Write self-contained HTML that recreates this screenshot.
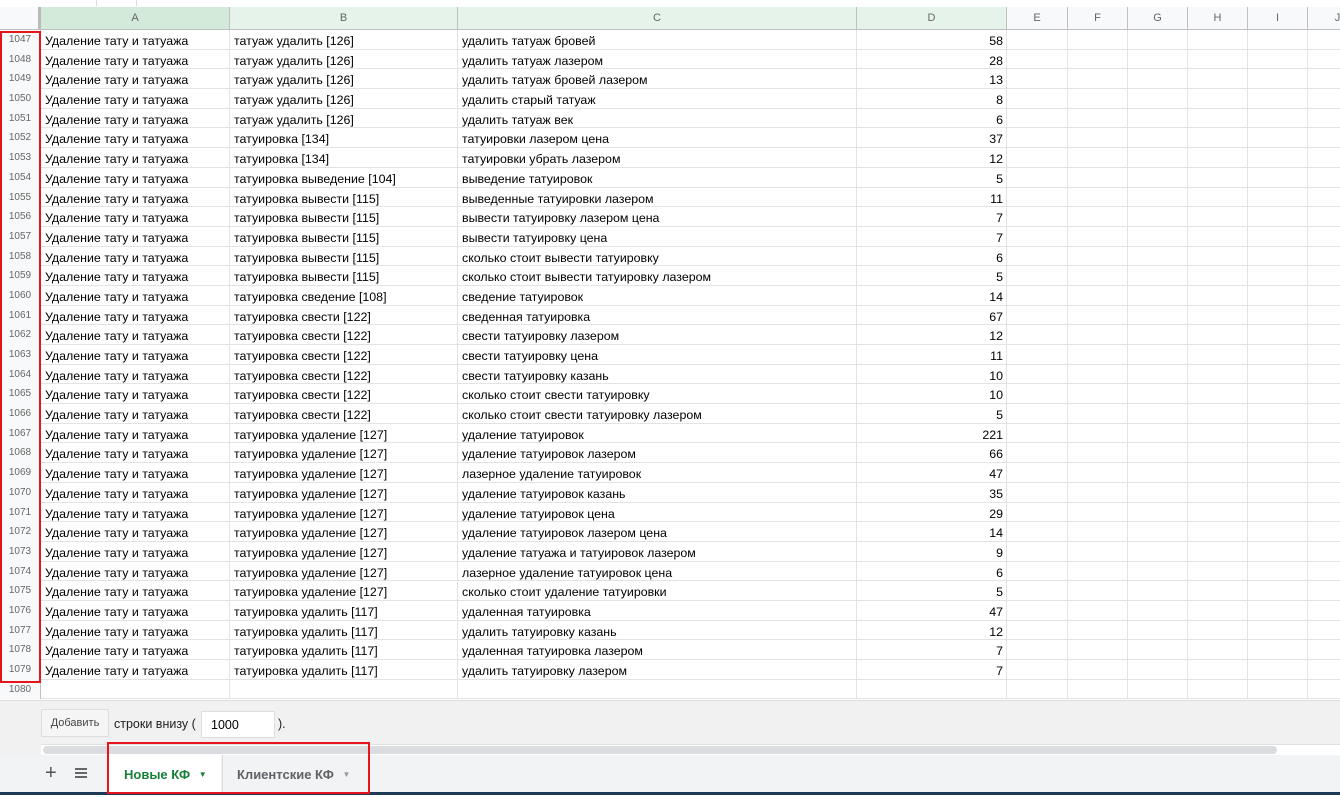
<!DOCTYPE html>
<html><head><meta charset="utf-8"><style>
*{box-sizing:border-box;margin:0;padding:0}
body{width:1340px;height:795px;overflow:hidden;background:#fff;font-family:"Liberation Sans",Arial,sans-serif;position:relative}
.hdr{position:absolute;top:7px;left:0;height:23px;width:1340px;background:#f8f9fa;border-bottom:1px solid #c0c0c0}
.hdr div{position:absolute;top:0;height:22px;border-right:1px solid #c0c0c0;font-size:11px;color:#666;text-align:center;line-height:22px}
.grid{position:absolute;top:30px;left:0;width:1340px}
.r{position:relative;height:19.7px;border-bottom:1px solid #e2e3e3}
.r div{position:absolute;top:0;height:19.7px;border-right:1px solid #e2e3e3;font-size:12.4px;color:#000;line-height:23px;white-space:nowrap;overflow:hidden;padding-left:4px}
.r .n{left:0;width:41px;background:#f8f9fa;border-right:1px solid #c0c0c0;color:#666;font-size:10px;text-align:center;padding:0;line-height:20px}
.r .a{left:41px;width:189px}.r .b{left:230px;width:228px}.r .c{left:458px;width:399px}
.r .d{left:857px;width:150px;text-align:right;padding-right:3px}
.r .e{left:1007px;width:61px}.r .f{left:1068px;width:60px}.r .g{left:1128px;width:60px}.r .h{left:1188px;width:60px}.r .i{left:1248px;width:60px}
</style></head><body>
<div style="position:absolute;top:0;left:96px;width:1px;height:6px;background:#ddd"></div>
<div style="position:absolute;top:0;left:136px;width:1px;height:6px;background:#ddd"></div>
<div class="hdr">
<div style="left:0;width:41px;border-right:3px solid #bbb"></div>
<div style="left:41px;width:189px;background:#d3e9d9">A</div>
<div style="left:230px;width:228px;background:#e6f3ea">B</div>
<div style="left:458px;width:399px;background:#e6f3ea">C</div>
<div style="left:857px;width:150px;background:#e6f3ea">D</div>
<div style="left:1007px;width:61px">E</div>
<div style="left:1068px;width:60px">F</div>
<div style="left:1128px;width:60px">G</div>
<div style="left:1188px;width:60px">H</div>
<div style="left:1248px;width:60px">I</div>
<div style="left:1308px;width:60px">J</div>
</div>
<div class="grid">
<div class="r"><div class="n">1047</div><div class="a">Удаление тату и татуажа</div><div class="b">татуаж удалить [126]</div><div class="c">удалить татуаж бровей</div><div class="d">58</div><div class="e"></div><div class="f"></div><div class="g"></div><div class="h"></div><div class="i"></div></div>
<div class="r"><div class="n">1048</div><div class="a">Удаление тату и татуажа</div><div class="b">татуаж удалить [126]</div><div class="c">удалить татуаж лазером</div><div class="d">28</div><div class="e"></div><div class="f"></div><div class="g"></div><div class="h"></div><div class="i"></div></div>
<div class="r"><div class="n">1049</div><div class="a">Удаление тату и татуажа</div><div class="b">татуаж удалить [126]</div><div class="c">удалить татуаж бровей лазером</div><div class="d">13</div><div class="e"></div><div class="f"></div><div class="g"></div><div class="h"></div><div class="i"></div></div>
<div class="r"><div class="n">1050</div><div class="a">Удаление тату и татуажа</div><div class="b">татуаж удалить [126]</div><div class="c">удалить старый татуаж</div><div class="d">8</div><div class="e"></div><div class="f"></div><div class="g"></div><div class="h"></div><div class="i"></div></div>
<div class="r"><div class="n">1051</div><div class="a">Удаление тату и татуажа</div><div class="b">татуаж удалить [126]</div><div class="c">удалить татуаж век</div><div class="d">6</div><div class="e"></div><div class="f"></div><div class="g"></div><div class="h"></div><div class="i"></div></div>
<div class="r"><div class="n">1052</div><div class="a">Удаление тату и татуажа</div><div class="b">татуировка [134]</div><div class="c">татуировки лазером цена</div><div class="d">37</div><div class="e"></div><div class="f"></div><div class="g"></div><div class="h"></div><div class="i"></div></div>
<div class="r"><div class="n">1053</div><div class="a">Удаление тату и татуажа</div><div class="b">татуировка [134]</div><div class="c">татуировки убрать лазером</div><div class="d">12</div><div class="e"></div><div class="f"></div><div class="g"></div><div class="h"></div><div class="i"></div></div>
<div class="r"><div class="n">1054</div><div class="a">Удаление тату и татуажа</div><div class="b">татуировка выведение [104]</div><div class="c">выведение татуировок</div><div class="d">5</div><div class="e"></div><div class="f"></div><div class="g"></div><div class="h"></div><div class="i"></div></div>
<div class="r"><div class="n">1055</div><div class="a">Удаление тату и татуажа</div><div class="b">татуировка вывести [115]</div><div class="c">выведенные татуировки лазером</div><div class="d">11</div><div class="e"></div><div class="f"></div><div class="g"></div><div class="h"></div><div class="i"></div></div>
<div class="r"><div class="n">1056</div><div class="a">Удаление тату и татуажа</div><div class="b">татуировка вывести [115]</div><div class="c">вывести татуировку лазером цена</div><div class="d">7</div><div class="e"></div><div class="f"></div><div class="g"></div><div class="h"></div><div class="i"></div></div>
<div class="r"><div class="n">1057</div><div class="a">Удаление тату и татуажа</div><div class="b">татуировка вывести [115]</div><div class="c">вывести татуировку цена</div><div class="d">7</div><div class="e"></div><div class="f"></div><div class="g"></div><div class="h"></div><div class="i"></div></div>
<div class="r"><div class="n">1058</div><div class="a">Удаление тату и татуажа</div><div class="b">татуировка вывести [115]</div><div class="c">сколько стоит вывести татуировку</div><div class="d">6</div><div class="e"></div><div class="f"></div><div class="g"></div><div class="h"></div><div class="i"></div></div>
<div class="r"><div class="n">1059</div><div class="a">Удаление тату и татуажа</div><div class="b">татуировка вывести [115]</div><div class="c">сколько стоит вывести татуировку лазером</div><div class="d">5</div><div class="e"></div><div class="f"></div><div class="g"></div><div class="h"></div><div class="i"></div></div>
<div class="r"><div class="n">1060</div><div class="a">Удаление тату и татуажа</div><div class="b">татуировка сведение [108]</div><div class="c">сведение татуировок</div><div class="d">14</div><div class="e"></div><div class="f"></div><div class="g"></div><div class="h"></div><div class="i"></div></div>
<div class="r"><div class="n">1061</div><div class="a">Удаление тату и татуажа</div><div class="b">татуировка свести [122]</div><div class="c">сведенная татуировка</div><div class="d">67</div><div class="e"></div><div class="f"></div><div class="g"></div><div class="h"></div><div class="i"></div></div>
<div class="r"><div class="n">1062</div><div class="a">Удаление тату и татуажа</div><div class="b">татуировка свести [122]</div><div class="c">свести татуировку лазером</div><div class="d">12</div><div class="e"></div><div class="f"></div><div class="g"></div><div class="h"></div><div class="i"></div></div>
<div class="r"><div class="n">1063</div><div class="a">Удаление тату и татуажа</div><div class="b">татуировка свести [122]</div><div class="c">свести татуировку цена</div><div class="d">11</div><div class="e"></div><div class="f"></div><div class="g"></div><div class="h"></div><div class="i"></div></div>
<div class="r"><div class="n">1064</div><div class="a">Удаление тату и татуажа</div><div class="b">татуировка свести [122]</div><div class="c">свести татуировку казань</div><div class="d">10</div><div class="e"></div><div class="f"></div><div class="g"></div><div class="h"></div><div class="i"></div></div>
<div class="r"><div class="n">1065</div><div class="a">Удаление тату и татуажа</div><div class="b">татуировка свести [122]</div><div class="c">сколько стоит свести татуировку</div><div class="d">10</div><div class="e"></div><div class="f"></div><div class="g"></div><div class="h"></div><div class="i"></div></div>
<div class="r"><div class="n">1066</div><div class="a">Удаление тату и татуажа</div><div class="b">татуировка свести [122]</div><div class="c">сколько стоит свести татуировку лазером</div><div class="d">5</div><div class="e"></div><div class="f"></div><div class="g"></div><div class="h"></div><div class="i"></div></div>
<div class="r"><div class="n">1067</div><div class="a">Удаление тату и татуажа</div><div class="b">татуировка удаление [127]</div><div class="c">удаление татуировок</div><div class="d">221</div><div class="e"></div><div class="f"></div><div class="g"></div><div class="h"></div><div class="i"></div></div>
<div class="r"><div class="n">1068</div><div class="a">Удаление тату и татуажа</div><div class="b">татуировка удаление [127]</div><div class="c">удаление татуировок лазером</div><div class="d">66</div><div class="e"></div><div class="f"></div><div class="g"></div><div class="h"></div><div class="i"></div></div>
<div class="r"><div class="n">1069</div><div class="a">Удаление тату и татуажа</div><div class="b">татуировка удаление [127]</div><div class="c">лазерное удаление татуировок</div><div class="d">47</div><div class="e"></div><div class="f"></div><div class="g"></div><div class="h"></div><div class="i"></div></div>
<div class="r"><div class="n">1070</div><div class="a">Удаление тату и татуажа</div><div class="b">татуировка удаление [127]</div><div class="c">удаление татуировок казань</div><div class="d">35</div><div class="e"></div><div class="f"></div><div class="g"></div><div class="h"></div><div class="i"></div></div>
<div class="r"><div class="n">1071</div><div class="a">Удаление тату и татуажа</div><div class="b">татуировка удаление [127]</div><div class="c">удаление татуировок цена</div><div class="d">29</div><div class="e"></div><div class="f"></div><div class="g"></div><div class="h"></div><div class="i"></div></div>
<div class="r"><div class="n">1072</div><div class="a">Удаление тату и татуажа</div><div class="b">татуировка удаление [127]</div><div class="c">удаление татуировок лазером цена</div><div class="d">14</div><div class="e"></div><div class="f"></div><div class="g"></div><div class="h"></div><div class="i"></div></div>
<div class="r"><div class="n">1073</div><div class="a">Удаление тату и татуажа</div><div class="b">татуировка удаление [127]</div><div class="c">удаление татуажа и татуировок лазером</div><div class="d">9</div><div class="e"></div><div class="f"></div><div class="g"></div><div class="h"></div><div class="i"></div></div>
<div class="r"><div class="n">1074</div><div class="a">Удаление тату и татуажа</div><div class="b">татуировка удаление [127]</div><div class="c">лазерное удаление татуировок цена</div><div class="d">6</div><div class="e"></div><div class="f"></div><div class="g"></div><div class="h"></div><div class="i"></div></div>
<div class="r"><div class="n">1075</div><div class="a">Удаление тату и татуажа</div><div class="b">татуировка удаление [127]</div><div class="c">сколько стоит удаление татуировки</div><div class="d">5</div><div class="e"></div><div class="f"></div><div class="g"></div><div class="h"></div><div class="i"></div></div>
<div class="r"><div class="n">1076</div><div class="a">Удаление тату и татуажа</div><div class="b">татуировка удалить [117]</div><div class="c">удаленная татуировка</div><div class="d">47</div><div class="e"></div><div class="f"></div><div class="g"></div><div class="h"></div><div class="i"></div></div>
<div class="r"><div class="n">1077</div><div class="a">Удаление тату и татуажа</div><div class="b">татуировка удалить [117]</div><div class="c">удалить татуировку казань</div><div class="d">12</div><div class="e"></div><div class="f"></div><div class="g"></div><div class="h"></div><div class="i"></div></div>
<div class="r"><div class="n">1078</div><div class="a">Удаление тату и татуажа</div><div class="b">татуировка удалить [117]</div><div class="c">удаленная татуировка лазером</div><div class="d">7</div><div class="e"></div><div class="f"></div><div class="g"></div><div class="h"></div><div class="i"></div></div>
<div class="r"><div class="n">1079</div><div class="a">Удаление тату и татуажа</div><div class="b">татуировка удалить [117]</div><div class="c">удалить татуировку лазером</div><div class="d">7</div><div class="e"></div><div class="f"></div><div class="g"></div><div class="h"></div><div class="i"></div></div>
<div class="r"><div class="n">1080</div><div class="a"></div><div class="b"></div><div class="c"></div><div class="d"></div><div class="e"></div><div class="f"></div><div class="g"></div><div class="h"></div><div class="i"></div></div>
</div>
<!-- bottom area -->
<div style="position:absolute;top:700px;left:0;width:1340px;height:92px;background:#f1f1f1;border-top:1px solid #ddd"></div>
<div style="position:absolute;top:709px;left:41px;width:68px;height:28px;background:#f5f5f5;border:1px solid #ddd;border-radius:2px;font-size:11px;color:#444;text-align:center;line-height:26px">Добавить</div>
<div style="position:absolute;top:717px;left:114px;font-size:12.5px;color:#222">строки внизу (</div>
<div style="position:absolute;top:711px;left:201px;width:74px;height:27px;background:#fff;border:1px solid #ddd;font-size:12.5px;padding-left:9px;line-height:27px">1000</div>
<div style="position:absolute;top:717px;left:278px;font-size:12.5px;color:#222">).</div>
<div style="position:absolute;top:744px;left:41px;width:1299px;height:11px;background:#fff;border-top:1px solid #e0e0e0"></div>
<div style="position:absolute;top:746px;left:43px;width:1234px;height:8px;background:#dadce0;border-radius:4px"></div>
<div style="position:absolute;top:755px;left:0;width:1340px;height:37px;background:#f1f3f4"></div>
<div style="position:absolute;top:762px;left:45px;font-size:20px;color:#555;line-height:22px">+</div>
<div style="position:absolute;top:768px;left:75px;width:12px;height:10px;border-top:2px solid #666;border-bottom:2px solid #666"></div>
<div style="position:absolute;top:772px;left:75px;width:12px;height:2px;background:#666"></div>
<div style="position:absolute;top:755px;left:109px;width:112px;height:37px;background:#fff;font-size:13px;font-weight:bold;color:#188038;line-height:40px;padding-left:15px">Новые КФ <span style="font-size:8px;position:relative;top:-2px;margin-left:5px">▼</span></div>
<div style="position:absolute;top:755px;left:222px;width:1px;height:37px;background:#ddd"></div>
<div style="position:absolute;top:755px;left:223px;width:145px;height:37px;font-size:13px;font-weight:bold;color:#5f6368;line-height:40px;padding-left:14px">Клиентские КФ <span style="font-size:8px;position:relative;top:-2px;margin-left:5px;color:#999">▼</span></div>
<div style="position:absolute;top:792px;left:0;width:1340px;height:3px;background:#1d3b57"></div>
<!-- red boxes -->
<div style="position:absolute;top:31px;left:0;width:41px;height:652px;border:2px solid #e8141c"></div>
<div style="position:absolute;top:742px;left:107px;width:263px;height:52px;border:2px solid #e8141c"></div>
</body></html>
